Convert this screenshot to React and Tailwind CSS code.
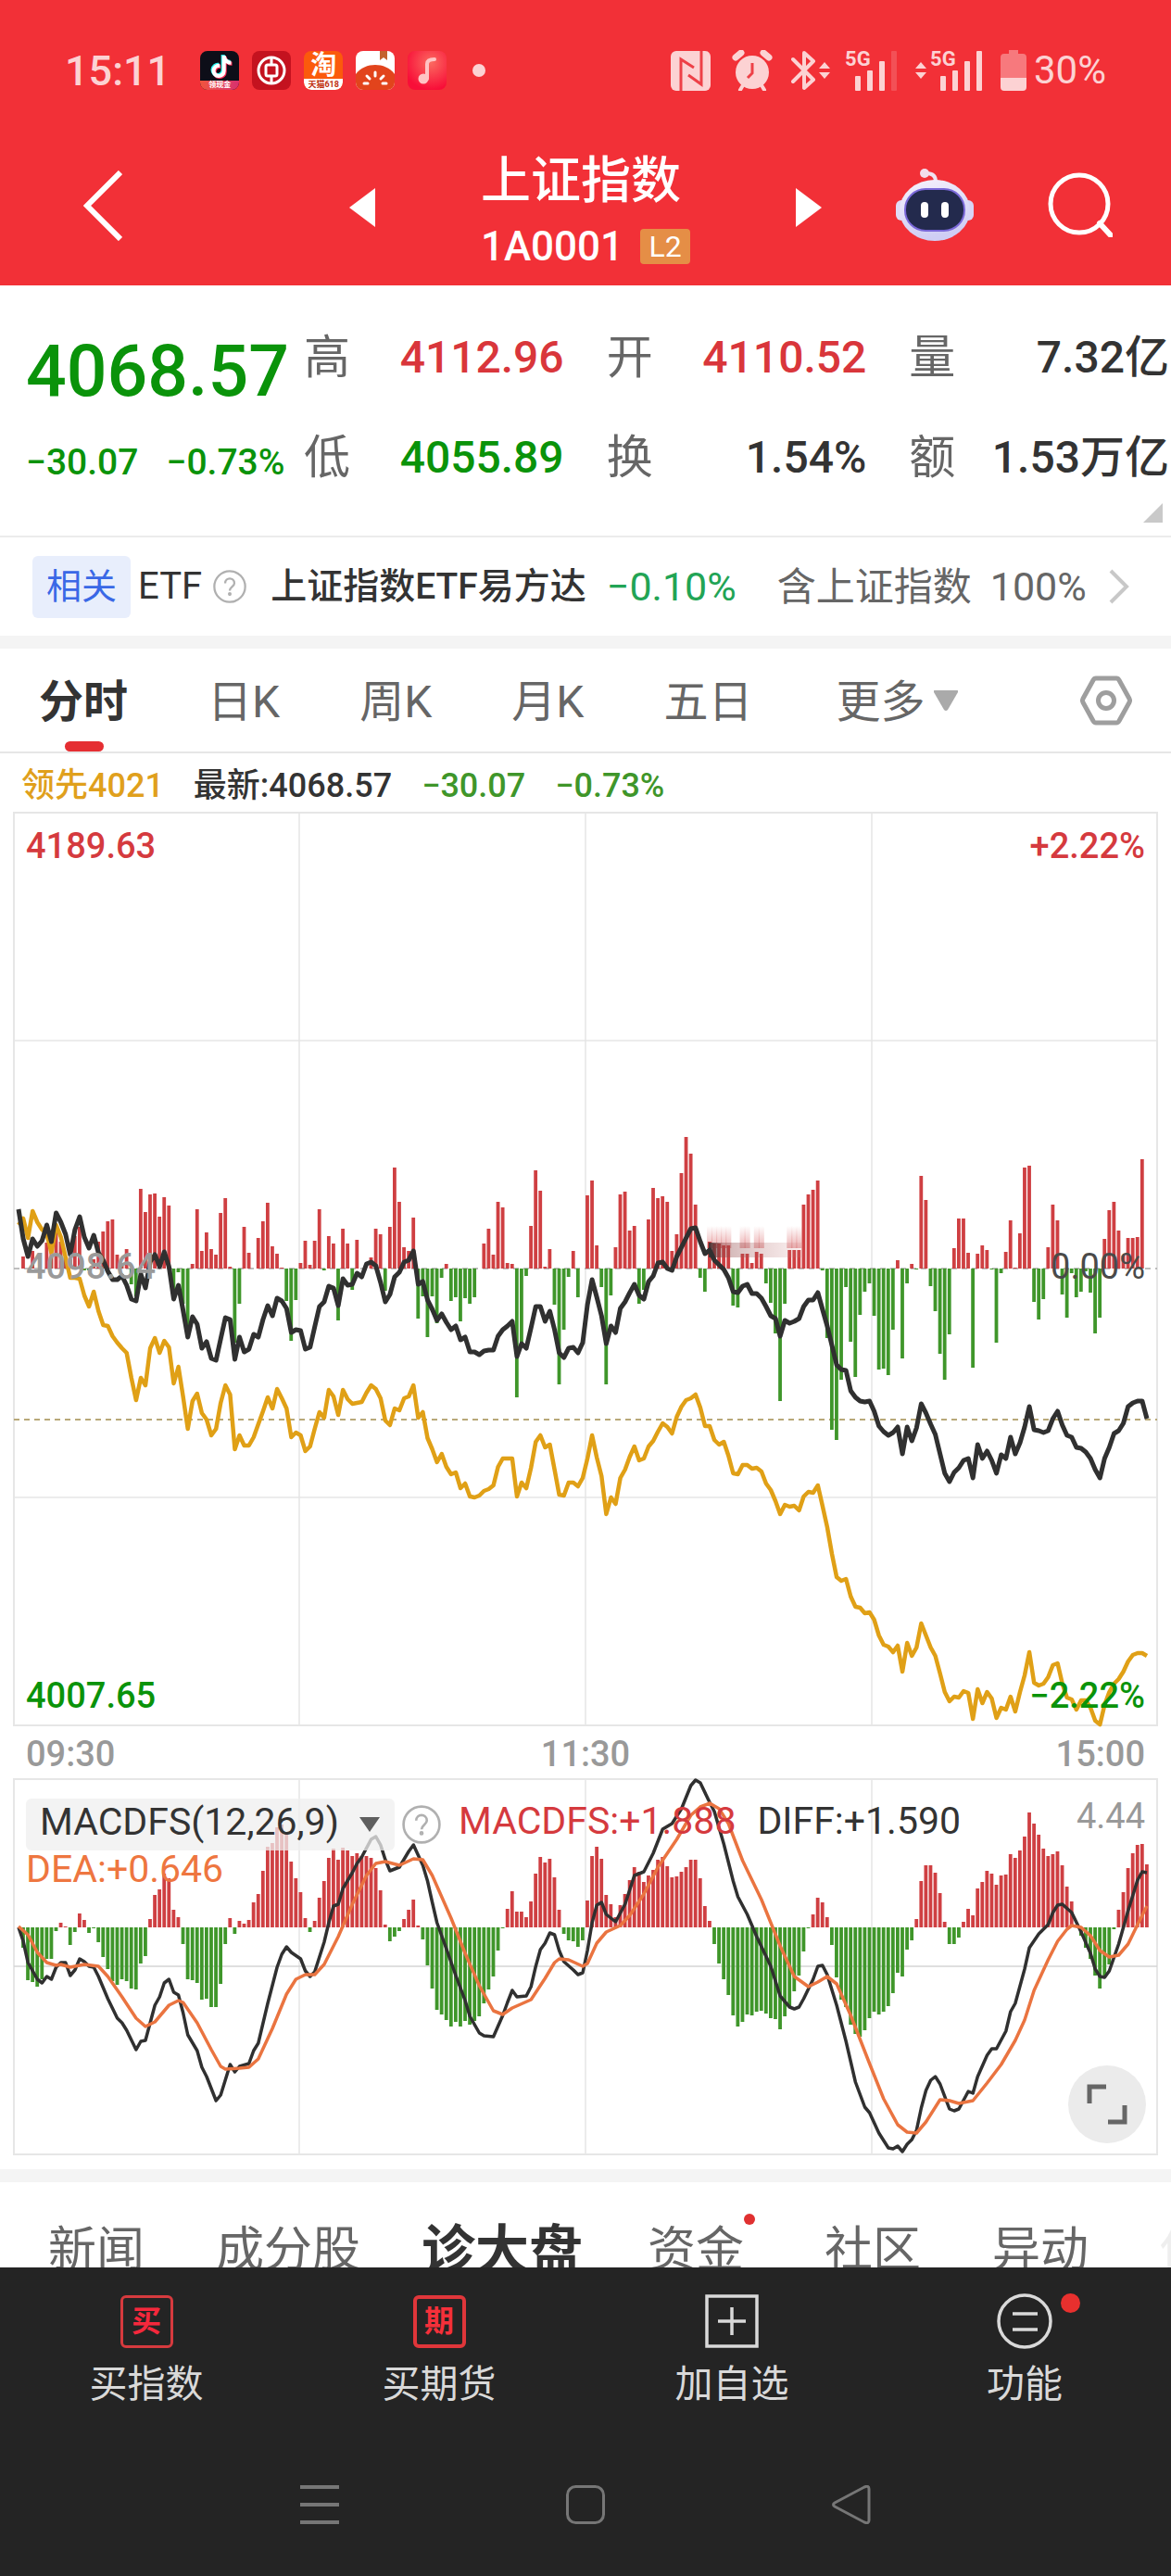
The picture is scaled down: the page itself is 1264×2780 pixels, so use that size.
// src/App.jsx
import React from "react";
import { FaTiktok } from "react-icons/fa";

// minute-by-minute series, in chart units above (+) or below (-) the zero line
const FORCE = [
  0, 13, 0, 19, 0, 0, 28, 24, 47, 29, 12, 10, 35, 45, -2, -2, 10, 29, 40, 51,
  53, 15, 3, 21, -17, -30, 86, 61, 80, 81, 56, 77, 68, -25, -4, -38, -66, 5, 64, 19,
  39, 21, 15, 60, 76, 2, -80, -38, 45, 17, 0, 33, 51, 71, 24, 16, 1, -35, -78, -34,
  6, 30, 4, 30, 64, -2, 35, 27, -56, 43, 27, -23, 31, 0, 0, 12, 43, 37, -24, 45,
  109, 72, 23, 19, 55, -54, -30, -74, -30, -59, -10, 5, -35, -31, -57, -32, -38, -31, 0, 27,
  43, 15, 72, 66, 6, 5, -139, -84, -8, 46, 106, 84, 2, 21, -39, -125, -66, -9, 19, -31,
  0, 79, 95, 25, -20, -125, -29, 23, 80, 83, 41, 46, -38, -23, 53, 87, 76, 78, 72, 19,
  37, 103, 142, 124, 69, -10, -25, 29, 27, 27, 25, 25, -40, -42, 16, 16, 6, 18, 16, -16,
  -37, -70, -143, -38, 20, 20, 20, 69, 80, 85, 95, -2, -75, -174, -185, -120, -20, -79, -117, -50,
  -25, -16, -51, -109, -108, -115, -66, 9, -97, -16, 5, -1, 100, 74, -19, -46, -92, -120, -71, 22,
  54, 54, 17, -107, 16, 25, 20, -1, -80, -5, 18, 52, 1, 38, 109, 111, -36, -55, -33, 23,
  69, 52, -28, -53, -5, -31, -25, -3, -26, -70, -53, 32, 63, 72, 41, 14, 33, 33, 34, 118,
];

const PRICE = [
  64, 32, 13, 32, 24, 30, 47, 29, 60, 50, 37, 15, 42, 56, 34, 22, 36, 17, 9, -3,
  -12, -12, -8, -18, -33, -35, -6, -21, 7, 15, 2, 18, 2, -33, -18, -45, -74, -52, -60, -86,
  -79, -97, -99, -76, -53, -55, -98, -74, -90, -87, -71, -74, -55, -40, -51, -32, -35, -43, -69, -66,
  -67, -87, -85, -63, -41, -36, -19, -21, -40, -11, -18, -17, -5, -9, 5, 7, 3, -15, -36, -28,
  -9, -4, 7, 9, 19, -17, -14, -34, -44, -56, -49, -58, -66, -62, -77, -74, -90, -90, -93, -89,
  -88, -88, -73, -66, -62, -57, -95, -81, -86, -64, -41, -41, -57, -46, -66, -91, -96, -86, -85, -91,
  -80, -39, -12, -31, -51, -81, -62, -69, -43, -36, -26, -17, -29, -33, -14, -8, 6, 7, 0, -2,
  13, 23, 33, 43, 44, 29, 16, 20, 9, 4, -1, -10, -25, -26, -19, -17, -27, -27, -32, -41,
  -51, -54, -73, -56, -59, -57, -54, -41, -34, -34, -26, -44, -62, -83, -104, -109, -110, -132, -139, -143,
  -144, -143, -154, -170, -176, -180, -177, -171, -200, -171, -186, -172, -146, -156, -168, -179, -200, -221, -230, -220,
  -215, -207, -205, -226, -190, -205, -197, -207, -221, -201, -205, -182, -200, -188, -171, -149, -174, -175, -177, -175,
  -162, -154, -169, -180, -182, -193, -194, -198, -205, -217, -226, -205, -193, -178, -175, -167, -149, -145, -143, -143,
  -162,
];

const LEADING = [
  47, 54, 33, 62, 50, 42, 37, 17, 47, 34, 12, -10, -10, -11, -29, -41, -25, -46, -61, -62,
  -73, -80, -86, -91, -118, -142, -118, -126, -86, -75, -91, -78, -85, -124, -106, -138, -173, -143, -135, -156,
  -163, -180, -173, -145, -126, -136, -195, -180, -191, -191, -182, -168, -154, -139, -151, -130, -140, -151, -182, -177,
  -180, -197, -192, -173, -155, -161, -131, -138, -158, -131, -141, -146, -145, -144, -134, -126, -130, -140, -164, -169,
  -151, -153, -140, -138, -126, -161, -155, -183, -195, -209, -200, -214, -222, -220, -237, -232, -246, -247, -245, -240,
  -238, -234, -214, -205, -205, -205, -246, -231, -237, -215, -187, -180, -193, -190, -217, -244, -245, -231, -231, -235,
  -226, -205, -180, -204, -224, -265, -247, -254, -226, -217, -203, -192, -207, -205, -192, -186, -176, -167, -171, -178,
  -160, -149, -142, -140, -136, -150, -170, -170, -185, -190, -187, -202, -221, -222, -212, -212, -216, -215, -219, -232,
  -239, -251, -265, -255, -257, -256, -261, -246, -241, -242, -234, -256, -279, -308, -333, -337, -335, -354, -365, -366,
  -372, -371, -379, -396, -406, -408, -414, -407, -435, -404, -418, -409, -383, -396, -409, -418, -437, -457, -467, -462,
  -463, -456, -458, -486, -454, -469, -457, -464, -485, -474, -476, -462, -478, -457, -439, -414, -447, -450, -448, -441,
  -428, -426, -448, -463, -465, -476, -466, -466, -474, -488, -492, -471, -457, -448, -443, -435, -424, -417, -415, -415,
  -418,
];

const MACD = [
  0, -22, -57, -59, -64, -56, -34, -34, -4, 5, 1, -19, -5, 15, 8, -6, -1, -16, -32, -45,
  -58, -62, -56, -58, -66, -67, -39, -31, 9, 35, 41, 58, 53, 19, 11, -18, -56, -57, -60, -78,
  -77, -86, -86, -61, -18, 10, -7, 7, 4, 8, 27, 36, 61, 87, 91, 108, 111, 103, 71, 53,
  38, 10, -5, 7, 32, 50, 75, 85, 73, 86, 83, 77, 80, 77, 77, 75, 64, 40, 3, -15,
  -10, -4, 9, 19, 30, 2, -13, -41, -66, -89, -94, -100, -107, -102, -107, -101, -105, -101, -96, -82,
  -67, -53, -25, -1, 20, 39, 17, 17, 11, 28, 58, 76, 70, 74, 54, 19, -7, -14, -15, -21,
  -14, 29, 77, 87, 74, 35, 25, 11, 24, 36, 51, 65, 60, 49, 56, 62, 73, 76, 66, 54,
  55, 60, 65, 73, 73, 53, 23, 7, -18, -39, -56, -73, -95, -107, -102, -94, -95, -91, -90, -93,
  -98, -99, -110, -96, -85, -69, -52, -26, -1, 14, 32, 27, 11, -19, -54, -78, -86, -105, -115, -118,
  -111, -98, -91, -94, -91, -85, -71, -49, -53, -24, -14, 9, 50, 67, 67, 59, 37, 6, -18, -18,
  -11, 6, 20, 13, 42, 49, 61, 58, 46, 56, 57, 79, 75, 83, 98, 124, 112, 100, 85, 77,
  79, 82, 67, 44, 28, 0, -9, -22, -34, -52, -66, -54, -40, -2, 19, 38, 64, 80, 89, 90,
  68,
];

// [minute slot, value]
const DIFF = [
  [0, 0], [1, -15], [2, -38], [4, -56], [5, -60], [6, -53], [7, -56], [8, -43], [9, -38], [10, -38],
  [11, -52], [12, -46], [13, -34], [14, -37], [15, -42], [16, -43], [17, -53], [19, -77], [21, -98], [22, -103],
  [23, -111], [25, -132], [26, -123], [27, -122], [29, -84], [30, -75], [31, -60], [32, -56], [33, -70], [34, -73],
  [35, -92], [36, -116], [38, -133], [39, -151], [40, -161], [42, -187], [43, -181], [45, -148], [46, -156], [47, -150],
  [49, -147], [50, -133], [51, -125], [53, -82], [55, -43], [56, -29], [57, -21], [58, -27], [60, -34], [61, -47],
  [62, -53], [63, -48], [65, -16], [66, 5], [67, 23], [68, 25], [69, 42], [71, 59], [72, 69], [73, 76],
  [75, 95], [76, 98], [77, 89], [78, 73], [79, 61], [81, 65], [83, 82], [84, 89], [86, 67], [87, 50],
  [88, 27], [89, 5], [91, -23], [93, -52], [95, -79], [96, -96], [98, -114], [99, -117], [101, -118], [103, -95],
  [104, -81], [105, -68], [106, -75], [108, -74], [109, -64], [110, -42], [111, -24], [112, -17], [113, -6], [114, -8],
  [115, -25], [116, -37], [118, -46], [119, -51], [120, -49], [121, -25], [122, 5], [123, 24], [124, 27], [125, 14],
  [127, 6], [129, 25], [131, 56], [133, 60], [135, 80], [137, 106], [139, 112], [141, 128], [143, 153], [144, 159],
  [145, 156], [147, 135], [148, 125], [150, 90], [152, 50], [153, 33], [155, 14], [157, -10], [160, -42], [162, -74],
  [164, -86], [165, -88], [166, -86], [167, -77], [169, -56], [170, -42], [171, -41], [172, -51], [174, -84], [176, -123],
  [178, -167], [180, -194], [181, -200], [183, -222], [185, -238], [186, -239], [187, -236], [188, -242], [189, -234], [190, -229],
  [191, -219], [192, -195], [193, -176], [194, -165], [195, -161], [196, -169], [198, -196], [199, -198], [200, -196], [202, -177],
  [203, -179], [204, -161], [206, -138], [207, -131], [208, -131], [210, -112], [211, -91], [212, -82], [214, -45], [215, -22],
  [217, -7], [219, 3], [220, 16], [221, 24], [222, 25], [224, 16], [226, -5], [228, -28], [229, -45], [230, -53],
  [231, -54], [232, -47], [234, -18], [236, 18], [238, 51], [239, 60], [240, 59],
];

const DEA = [
  [0, 1], [2, -8], [4, -27], [6, -38], [8, -41], [9, -40], [11, -43], [14, -40], [17, -42], [19, -53],
  [22, -75], [25, -98], [27, -107], [29, -102], [32, -84], [34, -79], [35, -81], [38, -103], [41, -132], [43, -150],
  [44, -153], [47, -152], [49, -151], [51, -142], [54, -109], [57, -72], [59, -56], [61, -51], [63, -51], [65, -40],
  [68, -10], [71, 25], [74, 56], [76, 69], [78, 71], [81, 67], [84, 74], [86, 73], [88, 56], [92, 10],
  [95, -28], [98, -63], [101, -90], [103, -94], [105, -87], [109, -78], [112, -55], [114, -38], [115, -34], [117, -35],
  [120, -42], [121, -39], [123, -17], [125, -5], [128, 2], [130, 13], [133, 36], [136, 65], [140, 95], [143, 121],
  [145, 130], [147, 134], [149, 128], [151, 112], [154, 72], [158, 30], [162, -20], [165, -53], [168, -64], [170, -59],
  [172, -53], [174, -61], [177, -95], [181, -147], [184, -185], [187, -213], [189, -221], [191, -222], [193, -210], [196, -186],
  [198, -187], [200, -190], [203, -187], [206, -168], [209, -148], [212, -122], [214, -100], [216, -68], [219, -35], [221, -15],
  [223, -2], [224, 2], [226, 0], [228, -9], [230, -25], [232, -32], [234, -30], [236, -18], [238, 3], [240, 23],
];

const RED = "#cf3f42";
const GREEN = "#3f962a";

const slotX = (i) => 5 + i * 5.075;
const toPoints = (pairs, zero) => pairs.map(([i, v]) => `${slotX(i).toFixed(1)},${zero - v}`).join(" ");
const indexed = (values) => values.map((v, i) => [i, v]);

function Bars({ values, zero }) {
  return values.map((v, i) =>
    v === 0 ? null : (
      <rect
        key={i}
        x={slotX(i) - 2}
        y={v > 0 ? zero - v : zero}
        width={3.8}
        height={Math.abs(v)}
        fill={v > 0 ? RED : GREEN}
      />
    )
  );
}

function PriceChart() {
  return (
    <svg viewBox="0 0 1234 985" className="block w-full h-auto overflow-visible" fill="none">
      <defs>
        <linearGradient id="smear" x1="0" x2="1">
          <stop offset="0" stopColor="#333" stopOpacity="0.9" />
          <stop offset="0.15" stopColor="#8a4444" stopOpacity="0.4" />
          <stop offset="1" stopColor="#cf8080" stopOpacity="0.12" />
        </linearGradient>
        <linearGradient id="ghost" x1="0" x2="0" y1="0" y2="1">
          <stop offset="0" stopColor={RED} stopOpacity="0" />
          <stop offset="1" stopColor={RED} stopOpacity="0.4" />
        </linearGradient>
      </defs>
      <g stroke="#e6e6e6" strokeWidth="2">
        <rect x="0" y="0" width="1234" height="985" />
        <path d="M308 0V985M617 0V985M926 0V985M0 246H1234M0 739H1234" strokeWidth="1.5" />
      </g>
      <path d="M0 492H1234" stroke="#aaa" strokeWidth="1.5" strokeDasharray="6 5" />
      <path d="M0 655H1234" stroke="#b8a878" strokeWidth="2" strokeDasharray="6 5" />
      <Bars values={FORCE} zero={492} />
      {[147, 148, 149, 150, 151, 154, 155, 157, 158, 164, 165, 166].map((i) => (
        <rect key={i} x={slotX(i) - 3} y="446" width="6" height="24" fill="url(#ghost)" />
      ))}
      <rect x="750" y="464" width="102" height="16" fill="url(#smear)" />
      <polyline points={toPoints(indexed(LEADING), 492)} stroke="#e0a016" strokeWidth="4.5" strokeLinejoin="round" />
      <polyline points={toPoints(indexed(PRICE), 492)} stroke="#303030" strokeWidth="5" strokeLinejoin="round" />
    </svg>
  );
}

function MacdChart() {
  return (
    <svg viewBox="0 0 1234 405" className="block w-full h-auto overflow-visible" fill="none">
      <g stroke="#e6e6e6" strokeWidth="2">
        <rect x="0" y="0" width="1234" height="405" />
        <path d="M308 0V405M617 0V405M926 0V405" strokeWidth="1.5" />
        <path d="M0 202H1234" stroke="#d4d4d4" strokeWidth="1.5" />
      </g>
      <Bars values={MACD} zero={160} />
      <polyline points={toPoints(DIFF, 160)} stroke="#303030" strokeWidth="3.5" strokeLinejoin="round" />
      <polyline points={toPoints(DEA, 160)} stroke="#ea7440" strokeWidth="3.5" strokeLinejoin="round" />
    </svg>
  );
}

function NotificationIcons() {
  return (
    <div className="flex items-center gap-3.5">
      <span className="relative block size-[42px] overflow-hidden rounded-lg bg-[#0d0e18]">
        <FaTiktok className="absolute left-2.5 top-1 size-6 text-[#25f4ee]" />
        <FaTiktok className="absolute left-3 top-1.5 size-6 text-[#fe2c55]" />
        <FaTiktok className="absolute left-[11px] top-[5px] size-6 text-white" />
        <span className="absolute inset-x-0 bottom-0 h-2.5 bg-gradient-to-r from-[#f0543c] to-[#d8306e] text-center text-[8px] leading-2.5 font-bold text-white">
          领现金
        </span>
      </span>
      <svg viewBox="0 0 42 42" className="size-[42px]" fill="none" stroke="#fff" strokeWidth="3">
        <rect width="42" height="42" rx="8" fill="#c4121f" stroke="none" />
        <circle cx="21" cy="21" r="14" />
        <rect x="15" y="15" width="12" height="12" rx="2" />
        <path d="M21 7V15M21 27V35" />
      </svg>
      <span className="relative block size-[42px] overflow-hidden rounded-lg bg-[#fb5a0c] text-center text-white">
        <span className="block text-[28px] leading-8 font-bold">淘</span>
        <span className="absolute inset-x-0 bottom-0 h-3 rounded-b-lg bg-white text-[9px] leading-3 font-bold text-[#c03010]">
          天猫618
        </span>
      </span>
      <svg viewBox="0 0 42 42" className="size-[42px]">
        <defs>
          <clipPath id="novel">
            <rect width="42" height="42" rx="8" />
          </clipPath>
        </defs>
        <g clipPath="url(#novel)">
          <rect width="42" height="42" fill="#fff" />
          <path d="M26 0h8v10l-4-3-4 3z" fill="#c4622e" />
          <path d="M-2 42V28C3 19 12 15 21 15s18 4 23 13v14z" fill="#e2441c" />
        </g>
        <path d="M9 35h4M12 27l3 3M21 23v4M30 27l-3 3M29 35h4" stroke="#fff" strokeWidth="3" strokeLinecap="round" />
      </svg>
      <svg viewBox="0 0 42 42" className="size-[42px]" fill="none">
        <defs>
          <radialGradient id="music" cx="0.6" cy="0.3" r="0.7">
            <stop offset="0" stopColor="#fb6a60" />
            <stop offset="1" stopColor="#f80e38" />
          </radialGradient>
        </defs>
        <rect width="42" height="42" rx="8" fill="url(#music)" />
        <circle cx="17" cy="30" r="5.5" fill="#ffc4c4" />
        <path d="M21 30V14c0-3 2-5 8-5" stroke="#ffc4c4" strokeWidth="4" strokeLinecap="round" />
      </svg>
      <span className="ml-3.5 size-3.5 rounded-full bg-[#fcd2d3]" />
    </div>
  );
}

function StatusIcons() {
  return (
    <div className="flex items-center text-[#fcd2d3]">
      <svg viewBox="0 0 43 43" className="size-[43px]" fill="none">
        <rect width="43" height="43" rx="6" fill="#fcd2d3" />
        <path d="M11 43V9L25 18M33 0V36L19 26" stroke="#ee4047" strokeWidth="3" />
      </svg>
      <svg viewBox="0 0 44 44" className="ml-[23px] size-11" fill="none" stroke="currentColor">
        <circle cx="22" cy="24" r="18" fill="currentColor" stroke="none" />
        <path d="M4 8l6-5M40 8l-6-5" strokeWidth="7" strokeLinecap="round" />
        <path d="M12 38l-3 5M32 38l3 5" strokeWidth="4" strokeLinecap="round" />
        <path d="M22 14v11l-5 5" stroke="#ee4047" strokeWidth="3" />
      </svg>
      <svg viewBox="0 0 28 44" className="ml-5 h-11 w-7" fill="none" stroke="currentColor" strokeWidth="4">
        <path d="M2 10l22 22-10 9V3l10 9L2 34" strokeLinejoin="round" strokeLinecap="round" />
      </svg>
      <span className="ml-0.5">
        <UpDown />
      </span>
      <Signal className="ml-4" last={0.2} />
      <span className="ml-5">
        <UpDown />
      </span>
      <Signal className="ml-1" last={1} />
      <svg viewBox="0 0 28 44" className="ml-5 h-11 w-7" fill="currentColor">
        <path d="M9 0h10v4h5q4 0 4 4v22H0V8q0-4 4-4h5z" opacity="0.45" />
        <path d="M0 30h28v10q0 4-4 4H4q-4 0-4-4z" />
      </svg>
      <span className="ml-2 text-[42px] leading-none">30%</span>
    </div>
  );
}

function UpDown() {
  return (
    <svg viewBox="0 0 12 18" className="h-[18px] w-3" fill="currentColor">
      <path d="M6 0l6 7H0zM6 18l6-7H0z" />
    </svg>
  );
}

function Signal({ className, last }) {
  return (
    <span className={`relative block h-11 w-14 ${className}`}>
      <span className="absolute left-0 top-0 text-[22px] leading-5 font-bold">5G</span>
      <svg viewBox="0 0 56 44" className="size-full" fill="currentColor">
        <rect x="11" y="28" width="6" height="16" rx="1" />
        <rect x="24" y="22" width="6" height="22" rx="1" />
        <rect x="37" y="12" width="6" height="32" rx="1" />
        <rect x="50" y="1" width="6" height="43" rx="1" opacity={last} />
      </svg>
    </span>
  );
}

function Robot() {
  return (
    <svg viewBox="0 0 84 78" className="h-[78px] w-[84px]">
      <defs>
        <linearGradient id="shell" x1="0" x2="0.3" y1="0" y2="1">
          <stop offset="0" stopColor="#f6f2fc" />
          <stop offset="1" stopColor="#cfcdf4" />
        </linearGradient>
      </defs>
      <path d="M43 14c0-6-3-9-10-9" fill="none" stroke="#f0e2f0" strokeWidth="4" />
      <circle cx="31" cy="5" r="5" fill="#f3dcea" />
      <rect x="0" y="34" width="14" height="22" rx="6" fill="#e0dcf6" />
      <rect x="70" y="34" width="14" height="22" rx="6" fill="#d8d4f6" />
      <ellipse cx="42" cy="45" rx="38" ry="33" fill="url(#shell)" />
      <rect x="10" y="22" width="64" height="45" rx="22" fill="#232a4d" stroke="#7a68d8" strokeWidth="2" />
      <rect x="27" y="36" width="8" height="17" rx="4" fill="#fff" />
      <rect x="49" y="36" width="8" height="17" rx="4" fill="#fff" />
    </svg>
  );
}

function HelpIcon({ className }) {
  return (
    <svg viewBox="0 0 40 40" className={className} fill="none" stroke="#b0b0b0" strokeWidth="2.5">
      <circle cx="20" cy="20" r="18.5" />
      <path d="M14.500 16c0-7.500 11-7.500 11 0 0 4-5.500 4.500-5.500 9" />
      <circle cx="20" cy="29" r="1" />
    </svg>
  );
}

function Header() {
  return (
    <header className="bg-[#f23037] pb-2 text-white">
      <div className="flex h-[152px] items-center justify-between pl-[70px] pr-[70px]">
        <div className="flex items-center gap-8">
          <span className="text-[45px] leading-none font-medium text-[#fcd2d3]">15:11</span>
          <NotificationIcons />
        </div>
        <StatusIcons />
      </div>

      <div className="grid h-[148px] grid-cols-[1fr_510px_1fr] items-center">
        <button aria-label="返回" className="ml-[90px] mb-2 w-fit">
          <svg viewBox="0 0 42 76" className="h-[76px] w-[42px]" fill="none" stroke="#fff" strokeWidth="6">
            <path d="M40 2L4 38l36 36" />
          </svg>
        </button>
        <div className="flex items-center justify-between">
          <button aria-label="上一个" className="mb-1">
            <svg viewBox="0 0 28 42" className="h-[42px] w-7" fill="#fff">
              <path d="M28 0v42L0 21z" />
            </svg>
          </button>
          <div className="flex flex-col gap-4 pt-1">
            <h1 className="flex h-[60px] items-center text-[54px] font-medium">上证指数</h1>
            <div className="flex h-[50px] items-center gap-4.5">
              <span className="text-[44px] font-medium">1A0001</span>
              <span className="flex h-[38px] w-[54px] items-center justify-center rounded-sm bg-[#e58e46] text-[32px]">
                L2
              </span>
            </div>
          </div>
          <button aria-label="下一个" className="mb-1">
            <svg viewBox="0 0 28 42" className="h-[42px] w-7" fill="#fff">
              <path d="M0 0v42l28-21z" />
            </svg>
          </button>
        </div>
        <div className="mb-2.5 flex items-center gap-20 pl-20">
          <button aria-label="智能助手">
            <Robot />
          </button>
          <button aria-label="搜索">
            <svg viewBox="0 0 70 70" className="size-[70px]" fill="none" stroke="#fff" strokeWidth="5">
              <circle cx="34" cy="34" r="31" />
              <path d="M56 55l12 13" strokeWidth="6" strokeLinecap="round" />
            </svg>
          </button>
        </div>
      </div>
    </header>
  );
}

const STATS = [
  { label: "高", value: "4112.96", color: "text-[#d9363b]" },
  { label: "开", value: "4110.52", color: "text-[#d9363b]" },
  { label: "量", value: "7.32亿", color: "text-[#333333]" },
  { label: "低", value: "4055.89", color: "text-[#0a930a]" },
  { label: "换", value: "1.54%", color: "text-[#333333]" },
  { label: "额", value: "1.53万亿", color: "text-[#333333]" },
];

function Quote() {
  return (
    <section className="relative flex border-b-2 border-[#ececec] pb-[54px] pl-7 pr-0.5 pt-12">
      <div className="w-[300px] shrink-0 pt-1.5 text-[#0a930a]">
        <div className="flex h-20 items-center text-[77px] font-medium">4068.57</div>
        <div className="mt-[33px] flex h-12 items-center gap-[30px] text-[39px] font-medium">
          <span>−30.07</span>
          <span>−0.73%</span>
        </div>
      </div>
      <dl className="grid flex-1 grid-cols-3 gap-x-[46px] gap-y-12">
        {STATS.map((s) => (
          <div key={s.label} className="flex h-[60px] items-center justify-between whitespace-nowrap">
            <dt className="text-[50px] text-[#666666]">{s.label}</dt>
            <dd className={`text-[48px] font-medium ${s.color}`}>{s.value}</dd>
          </div>
        ))}
      </dl>
      <svg viewBox="0 0 21 21" className="absolute bottom-3.5 right-[9px] size-[21px]" fill="#c9c9c9">
        <path d="M21 0v21H0z" />
      </svg>
    </section>
  );
}

function EtfRow() {
  return (
    <a href="#etf" className="flex h-[106px] items-center whitespace-nowrap pl-[35px] text-[#333333]">
      <span className="flex h-[67px] items-center rounded-md bg-[#e8eefc] px-[15px] text-[38px] text-[#3a68e6]">相关</span>
      <span className="ml-2 text-[40px]">ETF</span>
      <HelpIcon className="ml-3 size-9" />
      <span className="ml-[26px] text-[39px] font-medium">上证指数ETF易方达</span>
      <span className="ml-5.5 text-[43px] text-[#22a455]">−0.10%</span>
      <span className="ml-11 text-[42px] text-[#666666]">含上证指数</span>
      <span className="ml-5 text-[43px] text-[#666666]">100%</span>
      <svg viewBox="0 0 22 38" className="ml-6 h-[38px] w-[22px]" fill="none" stroke="#c8c8c8" strokeWidth="4">
        <path d="M2 2l17 17L2 36" />
      </svg>
    </a>
  );
}

function PeriodTabs() {
  return (
    <nav className="flex h-[113px] items-center gap-[86px] whitespace-nowrap border-b-2 border-[#e6e6e6] pl-[42px] pt-1 text-[48px] text-[#666666]">
      <button className="relative flex h-full items-center font-bold text-[#333333]">
        分时
        <span className="absolute bottom-0 left-7 h-[11px] w-[42px] rounded-full bg-[#e52e32]" />
      </button>
      <button>日K</button>
      <button>周K</button>
      <button>月K</button>
      <button>五日</button>
      <button className="ml-1 flex items-center gap-2.5" aria-haspopup="menu">
        更多
        <svg viewBox="0 0 26 22" className="mb-1 h-[22px] w-[26px]" fill="#aaaaaa">
          <path d="M1 0h24q2 0 1 2L15 21q-2 2-4 0L0 2q-1-2 1-2z" />
        </svg>
      </button>
      <button aria-label="设置" className="ml-auto mr-[42px] pb-1">
        <svg viewBox="0 0 56 54" className="h-[54px] w-14" fill="none" stroke="#9e9e9e" strokeWidth="5">
          <path d="M17 3h22q2 0 3 2l11 20q1 2 0 4L42 49q-1 2-3 2H17q-2 0-3-2L3 29q-1-2 0-4L14 5q1-2 3-2z" />
          <circle cx="28" cy="27" r="8.500" />
        </svg>
      </button>
    </nav>
  );
}

function Charts() {
  return (
    <main className="pl-[15px] pr-[15px]">
      <div className="flex h-16 items-center gap-8 whitespace-nowrap pl-2 pt-1.5 text-[36px] font-medium">
        <span className="text-[#e0a01c]">领先4021</span>
        <span className="text-[#333333]">最新:4068.57</span>
        <span className="text-[#3f962a]">−30.07</span>
        <span className="text-[#3f962a]">−0.73%</span>
      </div>

      <div className="relative text-[38px] leading-[44px] font-medium">
        <PriceChart />
        <div className="absolute inset-x-[13px] bottom-2.5 top-3.5 flex flex-col justify-between">
          <div className="flex justify-between text-[#d53a3e]">
            <span>4189.63</span>
            <span>+2.22%</span>
          </div>
          <div className="flex justify-between pb-2.5">
            <span className="text-[#9a9a9a]">4098.64</span>
            <span className="font-normal text-[#4a4a4a]">0.00%</span>
          </div>
          <div className="flex justify-between text-[#0a930a]">
            <span>4007.65</span>
            <span>−2.22%</span>
          </div>
        </div>
      </div>

      <div className="flex h-[58px] items-center justify-between px-[13px] pt-1 text-[38px] font-medium text-[#999999]">
        <span>09:30</span>
        <span>11:30</span>
        <span>15:00</span>
      </div>

      <div className="relative text-[41px]">
        <MacdChart />
        <div className="absolute inset-x-[13px] top-3 whitespace-nowrap">
          <div className="flex items-center">
            <label className="relative flex h-[56px] w-[398px] items-center rounded-md bg-[#efefef]/75">
              <select aria-label="指标" className="w-full appearance-none pb-1 pl-[15px] text-[#333333]">
                <option>MACDFS(12,26,9)</option>
              </select>
              <svg viewBox="0 0 22 16" className="pointer-events-none absolute right-4 h-4 w-[22px]" fill="#5e5e5e">
                <path d="M0 0h22L11 16z" />
              </svg>
            </label>
            <HelpIcon className="ml-2 size-[42px]" />
            <span className="ml-[19px] pb-1.5 text-[#d53a3e]">MACDFS:+1.888</span>
            <span className="ml-[23px] pb-1.5 text-[#333333]">DIFF:+1.590</span>
            <span className="ml-auto pb-4 text-[38px] text-[#999999]">4.44</span>
          </div>
          <div className="text-[#ee7640] leading-6">DEA:+0.646</div>
        </div>
        <button
          aria-label="全屏"
          className="absolute bottom-3 right-3 flex size-[84px] items-center justify-center rounded-full bg-[#ebebeb]"
        >
          <svg viewBox="0 0 44 44" className="size-11" fill="none" stroke="#666" strokeWidth="5">
            <path d="M3 21V3H21M41 23V41H23" />
          </svg>
        </button>
      </div>
    </main>
  );
}

function InfoTabs() {
  return (
    <nav className="flex h-[92px] items-start gap-[77px] overflow-hidden whitespace-nowrap pl-[52px] pt-11 text-[52px] leading-[60px] text-[#666666]">
      <button>新闻</button>
      <button>成分股</button>
      <button className="-ml-[11px] -mr-[7px] text-[58px] font-bold text-[#333333]">诊大盘</button>
      <button className="relative mr-2.5">
        资金
        <span className="absolute -right-3 -top-2.5 size-3 rounded-full bg-[#e03030]" />
      </button>
      <button>社区</button>
      <button>异动</button>
      <button className="opacity-10">估值</button>
    </nav>
  );
}

function BottomBar() {
  return (
    <footer className="bg-[#242424] text-[#d9d9d9]">
      <div className="grid grid-cols-4 pt-7 text-[41px] leading-12">
        <button className="flex flex-col items-center gap-3.5">
          <span className="flex size-[60px] items-center justify-center">
            <span className="flex size-[57px] items-center justify-center rounded-md border-3 border-[#d63a3e] text-[32px] font-bold leading-none text-[#f5283c]">
              买
            </span>
          </span>
          买指数
        </button>
        <button className="flex flex-col items-center gap-3.5">
          <span className="flex size-[60px] items-center justify-center">
            <span className="flex size-[57px] items-center justify-center rounded-md border-4 border-[#e0363a] text-[32px] font-bold leading-none text-[#f5303a]">
              期
            </span>
          </span>
          买期货
        </button>
        <button className="flex flex-col items-center gap-3.5">
          <svg viewBox="0 0 60 60" className="size-[60px]" fill="none" stroke="#d9d9d9" strokeWidth="3.500">
            <rect x="3" y="3" width="54" height="54" />
            <path d="M30 15v30M15 30h30" />
          </svg>
          加自选
        </button>
        <button className="flex flex-col items-center gap-3.5">
          <span className="relative">
            <svg viewBox="0 0 60 60" className="size-[60px]" fill="none" stroke="#d9d9d9" strokeWidth="3.500">
              <circle cx="30" cy="30" r="28" />
              <path d="M17 22h27M17 39h27" />
            </svg>
            <span className="absolute -right-[30px] top-0 size-[21px] rounded-full bg-[#e8302e]" />
          </span>
          功能
        </button>
      </div>

      {/* system navigation */}
      <div className="flex items-center justify-center gap-[245px] pb-14 pt-[85px]">
        <button aria-label="最近任务">
          <svg viewBox="0 0 42 42" className="size-[42px]" stroke="#767676" strokeWidth="4">
            <path d="M0 2h42M0 21h42M0 40h42" />
          </svg>
        </button>
        <button aria-label="主屏幕">
          <svg viewBox="0 0 42 42" className="size-[42px]" fill="none" stroke="#767676" strokeWidth="3">
            <rect x="1.500" y="1.500" width="39" height="39" rx="9" />
          </svg>
        </button>
        <button aria-label="返回上一页">
          <svg viewBox="0 0 42 42" className="size-[42px]" fill="none" stroke="#767676" strokeWidth="3">
            <path d="M3 19L35 2q5-2 5 2v34q0 4-5 2L3 23q-3-2 0-4z" />
          </svg>
        </button>
      </div>
    </footer>
  );
}

export default function App() {
  return (
    <div className="w-full overflow-hidden bg-white font-[Roboto,'Noto_Sans_CJK_SC',sans-serif]">
      <Header />
      <Quote />
      <EtfRow />
      <div className="h-3.5 bg-[#f4f4f4]" />
      <PeriodTabs />
      <Charts />
      <div className="mt-4 h-3.5 bg-[#f4f4f4]" />
      <InfoTabs />
      <BottomBar />
    </div>
  );
}
